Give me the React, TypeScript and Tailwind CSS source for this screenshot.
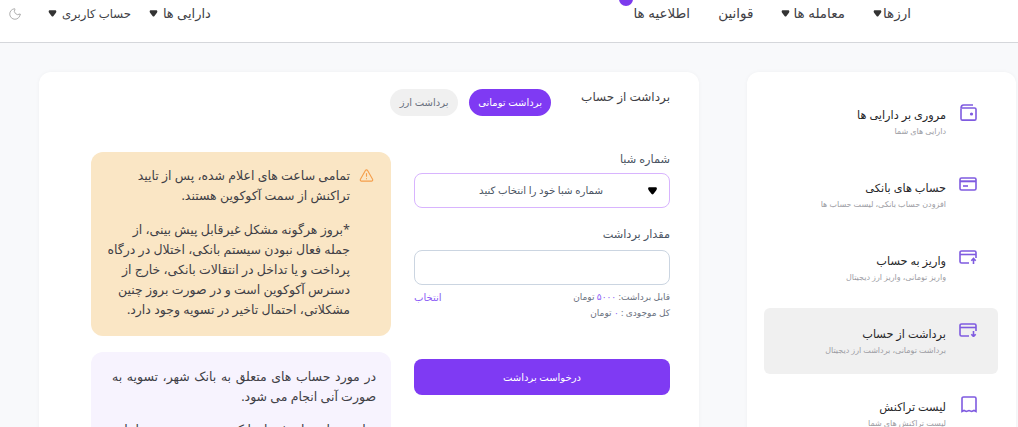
import { AlertTriangle, Moon } from "lucide-react";

const Caret = ({ className = "" }: { className?: string }) => (
    <svg viewBox="0 0 12 10" className={className} fill="currentColor">
        <path d="M.5 2C.5 .9 1.300 .3 2.300 .3h7.400c1 0 1.800.6 1.800 1.700 0 1.100-.6 2-1.400 3L7.100 8.900c-.6.7-1.600.7-2.200 0L1.900 5C1.100 4 .5 3.100 .5 2z" />
    </svg>
);

const WalletIcon = () => (
    <svg viewBox="0 0 17 17" className="h-[17px] w-[17px]" fill="none" stroke="#7f5be0" strokeWidth="1.600">
        <path d="M1 4.500v10.200c0 .8.6 1.400 1.400 1.400h12.200c.8 0 1.400-.6 1.400-1.400V5.300c0-.8-.6-1.300-1.400-1.300H1.500" />
        <path d="M1 4.500C1 2.300 1.800 1 3.500 1H13" />
        <circle cx="11.500" cy="10" r=".8" fill="#7f5be0" />
    </svg>
);

const CardIcon = () => (
    <svg viewBox="0 0 18 14" className="h-[14px] w-[18px]" fill="none" stroke="#7f5be0" strokeWidth="1.600">
        <rect x="1" y="1" width="16" height="12" rx="1.500" />
        <path d="M1 4.300h16" strokeWidth="2" />
        <path d="M4 9h5" />
    </svg>
);

const CardArrowIcon = ({ up }: { up: boolean }) => (
    <svg viewBox="0 0 18 14" className="h-[14px] w-[18px]" fill="none" stroke="#7f5be0" strokeWidth="1.600">
        <path d="M10 13H2.500C1.700 13 1 12.400 1 11.500v-9C1 1.600 1.700 1 2.500 1h13c.8 0 1.500.6 1.500 1.500V8" />
        <path d="M1 4.500h16" />
        {up ? <path d="M14.500 14V8.500M12.300 10.700l2.200-2.200 2.200 2.200" /> : <path d="M14.500 8v5.500M12.300 11.300l2.200 2.200 2.200-2.200" />}
    </svg>
);

const ReceiptIcon = () => (
    <svg viewBox="0 0 16 17" className="h-[17px] w-[16px]" fill="none" stroke="#7f5be0" strokeWidth="1.600">
        <path d="M1 15.500V2.500C1 1.600 1.700 1 2.500 1h11c.8 0 1.500.6 1.500 1.500v13l-2-1-2.300 1-2.700-1-2.700 1-2.300-1-2 1z" />
    </svg>
);

const menu = [
    { title: "مروری بر دارایی ها", sub: "دارایی های شما", icon: <WalletIcon /> },
    { title: "حساب های بانکی", sub: "افزودن حساب بانکی، لیست حساب ها", icon: <CardIcon /> },
    { title: "واریز به حساب", sub: "واریز تومانی، واریز ارز دیجیتال", icon: <CardArrowIcon up /> },
    { title: "برداشت از حساب", sub: "برداشت تومانی، برداشت ارز دیجیتال", icon: <CardArrowIcon up={false} />, active: true },
    { title: "لیست تراکنش", sub: "لیست تراکنش های شما", icon: <ReceiptIcon /> },
];

const Header = () => (
    <header className="flex h-[43px] shrink-0 justify-between border-b border-[#d5d7db] bg-white pr-[107px] pl-[8px] text-[13px] text-[#3f3f46]">
        <nav className="flex h-[27px] items-center gap-[28px] text-[13.500px]">
            <span className="flex items-center gap-[1px]">ارزها<Caret className="h-[7px] w-[9px] text-[#333]" /></span>
            <span className="flex items-center gap-[3px]">معامله ها<Caret className="h-[7px] w-[9px] text-[#333]" /></span>
            <span>قوانین</span>
            <span className="relative">
                اطلاعیه ها
                <span className="absolute top-[-11px] left-[-14px] h-[14px] w-[14px] rounded-full bg-[#7c3aed]" />
            </span>
        </nav>
        <nav className="flex h-[27px] items-center">
            <span className="flex items-center gap-[5px]">دارایی ها<Caret className="h-[7px] w-[9px] text-[#333]" /></span>
            <span className="mr-[18px] flex items-center gap-[5px] text-[11.700px]">حساب کاربری<Caret className="h-[7px] w-[9px] text-[#333]" /></span>
            <Moon className="mr-[26px] h-[14px] w-[14px] text-[#a3a3a3]" strokeWidth={1.500} />
        </nav>
    </header>
);

const Sidebar = () => (
    <aside className="h-[420px] w-[269px] shrink-0 rounded-xl bg-white pt-[17px] pr-[18px] pl-[17px] shadow-[0_0_4px_rgba(0,0,0,0.04)]">
        <ul className="flex flex-col gap-[7px]">
            {menu.map((item) => (
                <li
                    key={item.title}
                    className={`flex h-[66px] items-start gap-[13px] rounded-md pt-[15px] pr-[21px] ${item.active ? "bg-[#f0f0f0]" : ""}`}
                >
                    <span className="flex w-[18px] justify-start">{item.icon}</span>
                    <div>
                        <p className="text-[11.300px] leading-[22px] text-[#27272a]">{item.title}</p>
                        <p className="mt-[-1px] text-[8px] leading-[12px] text-[#9c9ca3]">{item.sub}</p>
                    </div>
                </li>
            ))}
        </ul>
    </aside>
);

const Form = () => (
    <section className="w-[256px] shrink-0">
        <label className="block text-[11.300px] leading-[14px] text-[#4b5563]">شماره شبا</label>
        <div className="mt-[7px] flex h-[35px] items-center gap-[44px] rounded-lg border border-[#d8b4fe] pr-[11px] text-[10.200px] text-[#4b5563]">
            <Caret className="h-[8px] w-[11px] text-black" />
            <span>شماره شبا خود را انتخاب کنید</span>
        </div>
        <label className="mt-[18px] block text-[11.300px] leading-[16px] text-[#4b5563]">مقدار برداشت</label>
        <input className="mt-[8px] h-[35px] w-full rounded-lg border border-[#cbd5e1]" />
        <div className="mt-[4px] flex justify-between text-[9px] leading-[16px] text-[#6b7280]">
            <span>قابل برداشت: <span className="text-[#8b5cf6]">۵۰۰۰</span> تومان</span>
            <span className="text-[10px] text-[#8b5cf6]">انتخاب</span>
        </div>
        <p className="text-[9px] leading-[16px] text-[#6b7280]">کل موجودی : <span className="text-[#8b5cf6]">۰</span> تومان</p>
        <button className="mt-[38px] h-[36px] w-full rounded-lg bg-[#7f3af3] text-[10px] font-medium text-white">درخواست برداشت</button>
    </section>
);

const Notes = () => (
    <section className="flex w-[300px] shrink-0 flex-col gap-[16px] text-[12.500px] leading-[20px] text-[#3f3f46]">
        <div className="flex gap-[9px] rounded-xl bg-[#fae6c5] pt-[14px] pr-[17px] pb-[16px] pl-[8px]">
            <AlertTriangle className="mt-[2px] h-[15px] w-[15px] shrink-0 text-[#f59e4b]" strokeWidth={1.800} />
            <div>
                <p>تمامی ساعت های اعلام شده، پس از تایید <br />تراکنش از سمت آکوکوین هستند.</p>
                <p className="mt-[14px]">
                    *بروز هرگونه مشکل غیرقابل پیش بینی، از
                    <br />
                    جمله فعال نبودن سیستم بانکی، اختلال در درگاه پرداخت و یا تداخل در انتقالات بانکی، خارج از دسترس آکوکوین است و در صورت بروز چنین مشکلاتی، احتمال تاخیر در تسویه وجود دارد.
                </p>
            </div>
        </div>
        <div className="rounded-xl bg-[#f7f3fe] pt-[15px] pr-[15px] pb-[17px] pl-[21px]">
            <p className="text-justify">در مورد حساب های متعلق به بانک شهر، تسویه به صورت آنی انجام می شود.</p>
            <p className="mt-[13px]">برای حساب های غیر از بانک شهر، تسویه در ساعات اعلام شده انجام می شود.</p>
        </div>
    </section>
);

export default function App() {
    return (
        <div dir="rtl" className="flex h-[427px] w-[1018px] flex-col overflow-hidden bg-[#f8f9fb] font-['Noto_Sans','DejaVu_Sans',sans-serif]">
            <Header />
            <main className="flex items-start gap-[48px] pt-[29px] pr-[2px]">
                <Sidebar />
                <div className="h-[420px] w-[660px] shrink-0 rounded-xl bg-white pt-[17px] pr-[29px] shadow-[0_0_4px_rgba(0,0,0,0.04)]">
                    <div className="flex items-start gap-[30px]">
                        <h1 className="text-[12px] leading-[16px] text-[#3f3f46]">برداشت از حساب</h1>
                        <div className="flex gap-[11px]">
                            <button className="h-[27px] w-[82px] rounded-full bg-[#7f3af3] text-[10px] text-white">برداشت تومانی</button>
                            <button className="h-[27px] w-[68px] rounded-full bg-[#f0f0f0] text-[10px] text-[#6b7280]">برداشت ارز</button>
                        </div>
                    </div>
                    <div className="mt-[36px] flex gap-[23px]">
                        <Form />
                        <Notes />
                    </div>
                </div>
            </main>
        </div>
    );
}
